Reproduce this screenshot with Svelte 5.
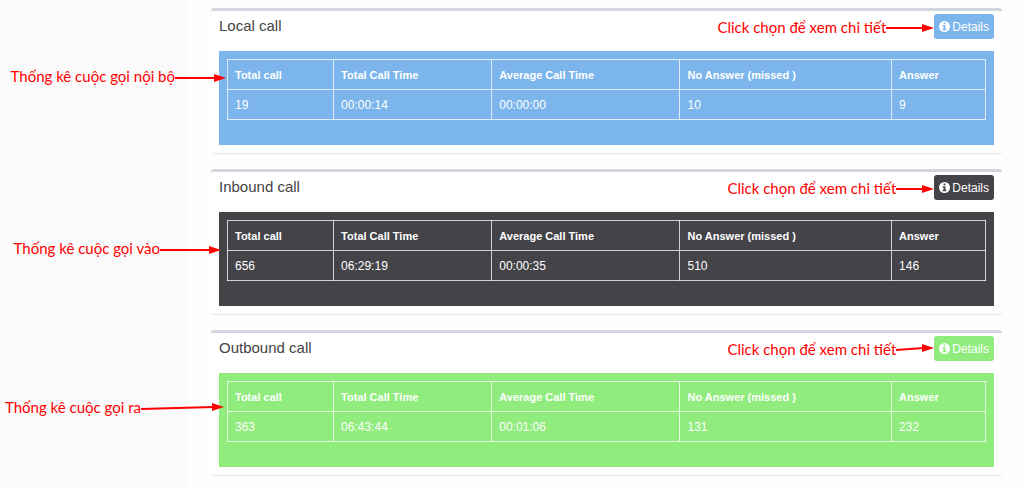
<script>
  const columns = ['Total call', 'Total Call Time', 'Average Call Time', 'No Answer (missed )', 'Answer'];

  // reach: how far the arrow tip goes into the card, tilt: drop of the arrow from tail to tip
  const sections = [
    {
      id: 'local',
      title: 'Local call',
      values: ['19', '00:00:14', '00:00:00', '10', '9'],
      note: { text: 'Thống kê cuộc gọi nội bộ', top: 55, reach: 15, length: 51, tilt: 0 },
      hint: { length: 48, tilt: 0 }
    },
    {
      id: 'inbound',
      title: 'Inbound call',
      values: ['656', '06:29:19', '00:00:35', '510', '146'],
      note: { text: 'Thống kê cuộc gọi vào', top: 66, reach: 10, length: 61, tilt: 0 },
      hint: { length: 38, tilt: 0 }
    },
    {
      id: 'outbound',
      title: 'Outbound call',
      values: ['363', '06:43:44', '00:01:06', '131', '232'],
      note: { text: 'Thống kê cuộc gọi ra', top: 64, reach: 13, length: 83, tilt: -2 },
      hint: { length: 38, tilt: -2 }
    }
  ];
</script>

{#snippet arrow(length, tilt)}
  <svg class="arrow" width={length} height="16" viewBox="0 0 {length} 16" aria-hidden="true">
    <line x1="0" y1="9" x2={length - 10} y2={9 + tilt} stroke="#ff0000" stroke-width="2" />
    <path d="M{length} {9 + tilt}l-12 -4v8z" fill="#ff0000" />
  </svg>
{/snippet}

<div class="page">
  <aside class="sidebar"></aside>

  <main class="content">
    {#each sections as section (section.id)}
      <section class="card {section.id}">
        <header class="card-header">
          <h3>{section.title}</h3>
          <div class="note">
            <span>Click chọn để xem chi tiết</span>
            {@render arrow(section.hint.length, section.hint.tilt)}
          </div>
          <button type="button" class="details">
            <svg width="11" height="11" viewBox="0 0 12 12" aria-hidden="true">
              <path
                fill="#fff"
                fill-rule="evenodd"
                d="M6 0a6 6 0 1 0 0 12A6 6 0 0 0 6 0zM5 1.7h2v1.8H5zM4 4.5h3v4h1V10H4V8.500h1V6H4z"
              />
            </svg>
            Details
          </button>
        </header>

        <div class="panel">
          <table>
            <thead>
              <tr>
                {#each columns as column}
                  <th scope="col">{column}</th>
                {/each}
              </tr>
            </thead>
            <tbody>
              <tr>
                {#each section.values as value}
                  <td>{value}</td>
                {/each}
              </tr>
            </tbody>
          </table>
        </div>

        <div
          class="note side-note"
          style="top: {section.note.top}px; right: calc(100% - {section.note.reach}px)"
        >
          <span>{section.note.text}</span>
          {@render arrow(section.note.length, section.note.tilt)}
        </div>
      </section>
    {/each}
  </main>
</div>

<style>
  :global(body) {
    margin: 0;
    background: #fefefe;
  }

  .page {
    display: grid;
    grid-template-columns: 187px 1fr;
    min-height: 100vh;
    font-family: "Liberation Sans", Arial, sans-serif;
    font-size: 12px;
    color: #444;
  }

  .sidebar {
    background: #fafafa;
  }

  .content {
    display: flex;
    flex-direction: column;
    gap: 16px;
    padding: 8px 22px 8px 24px;
  }

  .card {
    position: relative;
    background: #fff;
    border-top: 3px solid #d2d6de;
    border-radius: 3px;
    box-shadow: 0 1px 1px rgba(0, 0, 0, 0.1);
    padding: 3px 8px 8px;
  }

  .card-header {
    display: flex;
    align-items: center;
    height: 25px;
    margin-bottom: 12px;
  }

  h3 {
    flex: 1;
    margin: 0;
    padding-bottom: 2px;
    font-size: 15px;
    font-weight: 400;
    line-height: 20px;
  }

  .details {
    display: flex;
    align-items: center;
    gap: 2px;
    height: 25px;
    padding: 0 5px;
    border: 0;
    border-radius: 3px;
    color: #fff;
    font-family: inherit;
    font-size: 12px;
    cursor: pointer;
  }

  .panel {
    padding: 8px 8px 25px;
    color: #fff;
  }

  .local .panel,
  .local .details {
    background: #7cb5ec;
  }

  .inbound .panel,
  .inbound .details {
    background: #434348;
  }

  .outbound .panel,
  .outbound .details {
    background: #90ed7d;
  }

  table {
    width: 100%;
    border-collapse: collapse;
  }

  th,
  td {
    height: 17px;
    padding: 7px 7px 5px;
    border: 1px solid rgba(255, 255, 255, 0.75);
    line-height: 17px;
    text-align: left;
  }

  th {
    font-size: 11px;
  }

  .note {
    display: flex;
    align-items: center;
    color: #ff0000;
    font-family: Lato, "Open Sans", sans-serif;
    font-size: 15px;
    line-height: 20px;
    white-space: nowrap;
  }

  .side-note {
    position: absolute;
  }

  .side-note span {
    padding-bottom: 2px;
  }

  .arrow {
    flex: none;
  }
</style>
